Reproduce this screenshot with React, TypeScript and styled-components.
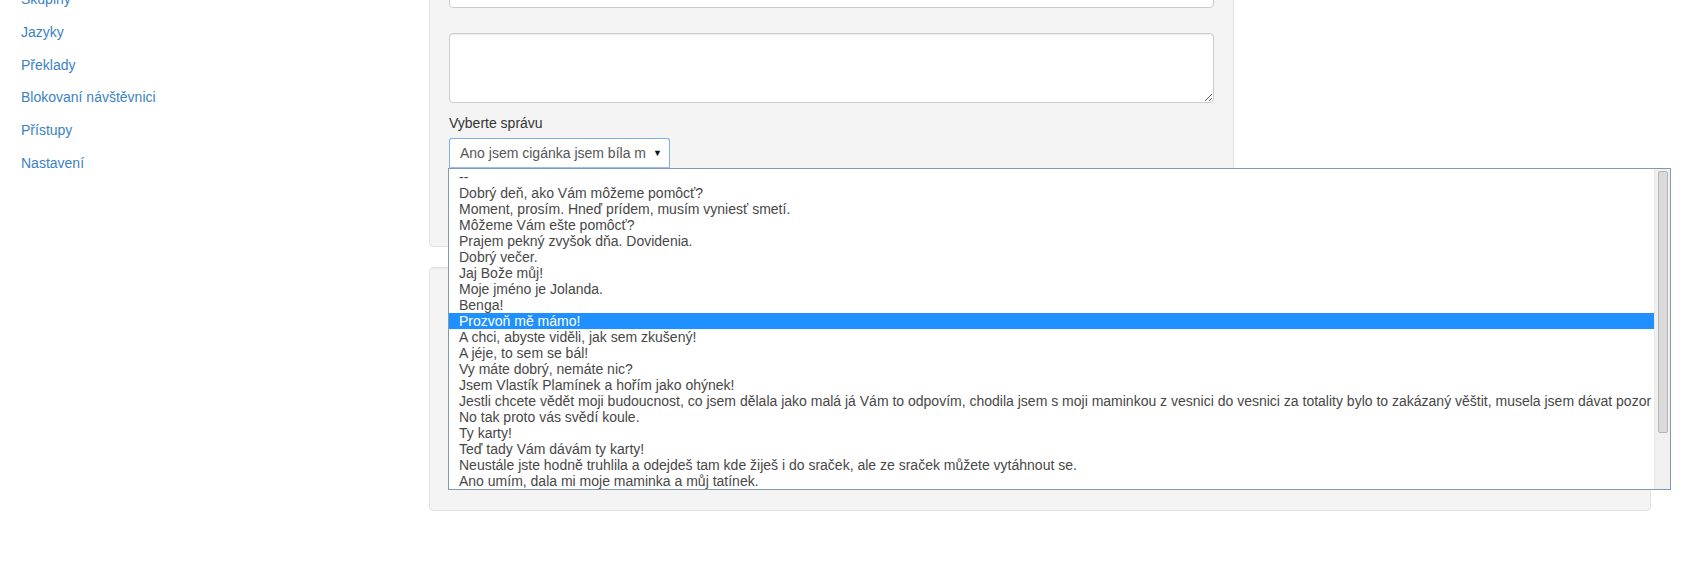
import React from 'react';
import styled, { createGlobalStyle } from 'styled-components';

const GlobalStyle = createGlobalStyle`
  html, body {
    margin: 0;
    padding: 0;
    background: #fff;
    overflow: hidden;
  }
  body {
    font-family: 'Liberation Sans', Arial, sans-serif;
    font-size: 14px;
    color: #333;
  }
`;

const sideLinks = ['Skupiny', 'Jazyky', 'Překlady', 'Blokovaní návštěvnici', 'Přístupy', 'Nastavení'];

const messages = [
  '--',
  'Dobrý deň, ako Vám môžeme pomôcť?',
  'Moment, prosím. Hneď prídem, musím vyniesť smetí.',
  'Môžeme Vám ešte pomôcť?',
  'Prajem pekný zvyšok dňa. Dovidenia.',
  'Dobrý večer.',
  'Jaj Bože můj!',
  'Moje jméno je Jolanda.',
  'Benga!',
  'Prozvoň mě mámo!',
  'A chci, abyste viděli, jak sem zkušený!',
  'A jéje, to sem se bál!',
  'Vy máte dobrý, nemáte nic?',
  'Jsem Vlastík Plamínek a hořím jako ohýnek!',
  'Jestli chcete vědět moji budoucnost, co jsem dělala jako malá já Vám to odpovím, chodila jsem s moji maminkou z vesnici do vesnici za totality bylo to zakázaný věštit, musela jsem dávat pozor',
  'No tak proto vás svědí koule.',
  'Ty karty!',
  'Teď tady Vám dávám ty karty!',
  'Neustále jste hodně truhlila a odejdeš tam kde žiješ i do sraček, ale ze sraček můžete vytáhnout se.',
  'Ano umím, dala mi moje maminka a můj tatínek.',
];

const selectedIndex = 9;

const App = () => {
  return (
    <>
      <GlobalStyle />
      <Page>
        <Sidebar>
          <NavList>
            {sideLinks.map(link => (
              <NavItem key={link}>
                <NavLink href="#">{link}</NavLink>
              </NavItem>
            ))}
          </NavList>
        </Sidebar>

        <Main>
          <Well $width={805}>
            <TextArea $height={80} $gap={25} $resizable={false} />
            <TextArea $height={70} $gap={10} $resizable />

            <FieldGroup>
              <FieldLabel>Vyberte správu</FieldLabel>
              <SelectWrap>
                <SelectBox>
                  <SelectValue>Ano jsem cigánka jsem bíla m</SelectValue>
                  <SelectArrow>▼</SelectArrow>
                </SelectBox>

                {/* otevřený seznam zpráv */}
                <DropPanel>
                  <DropList>
                    {messages.map((msg, i) => (
                      <DropOption key={i} $active={i === selectedIndex}>
                        {msg}
                      </DropOption>
                    ))}
                  </DropList>
                  <ScrollTrack>
                    <ScrollThumb />
                  </ScrollTrack>
                </DropPanel>
              </SelectWrap>
            </FieldGroup>
          </Well>

          <Well $width={1222} $minHeight={244} />
        </Main>
      </Page>
    </>
  );
};

const Page = styled.div`
  display: flex;
  align-items: flex-start;
  margin-top: -92px;
`;

const Sidebar = styled.aside`
  flex: 0 0 429px;
  padding: 75px 0 0 21px;
  box-sizing: border-box;
`;

const NavList = styled.ul`
  list-style: none;
  margin: 0;
  padding: 0;
`;

const NavItem = styled.li`
  height: 32.8px;
  line-height: 32.8px;
`;

const NavLink = styled.a`
  color: #3b82c4;
  text-decoration: none;
  font-size: 14px;
`;

const Main = styled.main`
  flex: 1;
  display: flex;
  flex-direction: column;
  gap: 20px;
`;

const Well = styled.div<{ $width: number; $minHeight?: number }>`
  width: ${props => props.$width}px;
  min-height: ${props => (props.$minHeight ? `${props.$minHeight}px` : 'auto')};
  box-sizing: border-box;
  padding: 19px;
  background-color: #f4f4f4;
  border: 1px solid #e3e3e3;
  border-radius: 4px;
  box-shadow: inset 0 1px 1px rgba(0, 0, 0, 0.05);
`;

const TextArea = styled.textarea<{ $height: number; $gap: number; $resizable: boolean }>`
  display: block;
  width: 765px;
  height: ${props => props.$height}px;
  margin: 0 0 ${props => props.$gap}px;
  box-sizing: border-box;
  padding: 6px 12px;
  border: 1px solid #ccc;
  border-radius: 4px;
  background: #fff;
  box-shadow: inset 0 1px 1px rgba(0, 0, 0, 0.075);
  font-family: inherit;
  font-size: 14px;
  resize: ${props => (props.$resizable ? 'vertical' : 'none')};
`;

const FieldGroup = styled.div`
  margin-bottom: 59px;
`;

const FieldLabel = styled.label`
  display: block;
  line-height: 20px;
  margin-bottom: 5px;
  font-size: 14px;
  color: #333;
`;

const SelectWrap = styled.div`
  position: relative;
  width: 221px;
`;

const SelectBox = styled.div`
  display: flex;
  align-items: center;
  height: 30px;
  box-sizing: border-box;
  padding: 0 7px 0 10px;
  border: 1px solid #7fb0e3;
  border-bottom-color: #9cc2ea;
  border-radius: 3px 3px 0 0;
  background: #fff;
`;

const SelectValue = styled.span`
  flex: 0 0 186px;
  overflow: hidden;
  white-space: nowrap;
  font-size: 14px;
  color: #555;
`;

const SelectArrow = styled.span`
  margin-left: auto;
  font-size: 9px;
  color: #111;
`;

const DropPanel = styled.div`
  position: absolute;
  top: 30px;
  left: -1px;
  width: 1223px;
  height: 322px;
  box-sizing: border-box;
  display: flex;
  background: #fff;
  border: 1px solid #8199b2;
  z-index: 10;
`;

const DropList = styled.ul`
  flex: 1;
  min-width: 0;
  margin: 0;
  padding: 0;
  list-style: none;
  overflow: hidden;
`;

const DropOption = styled.li<{ $active: boolean }>`
  height: 16px;
  line-height: 16px;
  padding-left: 10px;
  font-size: 14px;
  white-space: nowrap;
  overflow: hidden;
  color: ${props => (props.$active ? '#fff' : '#474747')};
  background-color: ${props => (props.$active ? '#1e90ff' : 'transparent')};
`;

const ScrollTrack = styled.div`
  flex: 0 0 16px;
  box-sizing: border-box;
  padding: 2px 2px 0 3px;
  background: #f0f0f0;
  border-left: 1px solid #e8e8e8;
`;

const ScrollThumb = styled.div`
  height: 262px;
  box-sizing: border-box;
  background: #dadada;
  border: 1px solid #b4b4b4;
  border-radius: 2px;
`;

export default App;
